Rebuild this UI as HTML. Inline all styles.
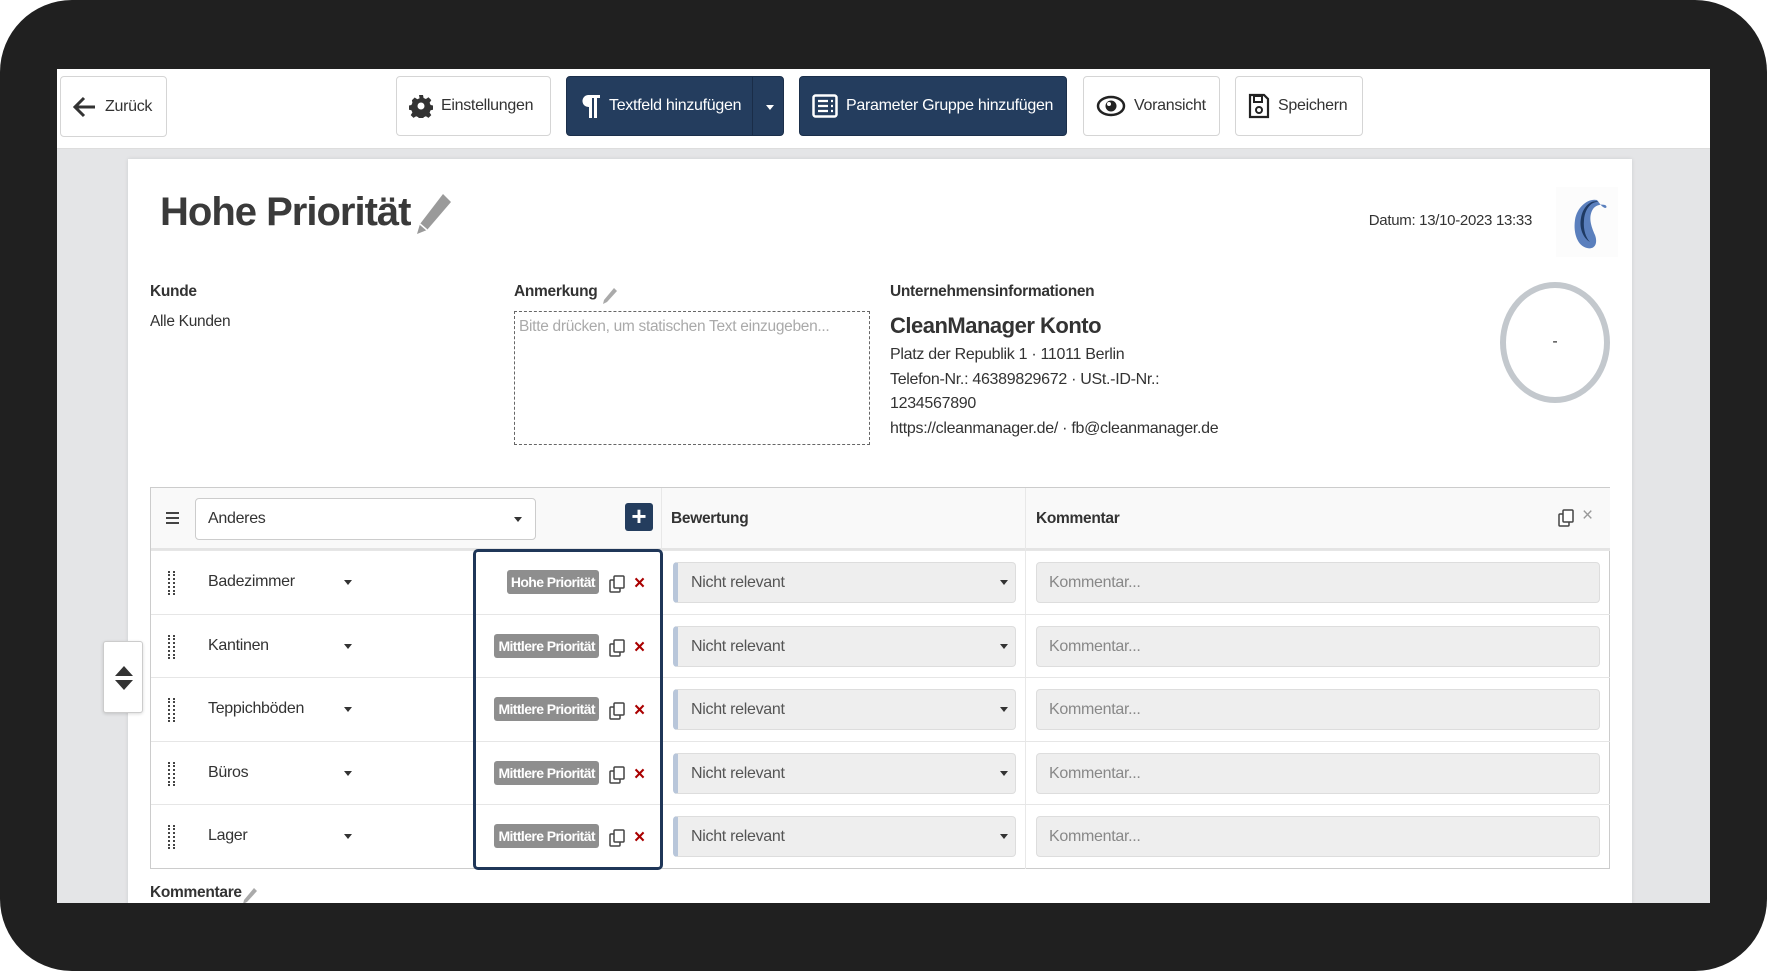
<!DOCTYPE html>
<html><head><meta charset="utf-8"><style>
*{box-sizing:border-box;margin:0;padding:0}
body{width:1767px;height:971px;background:#fff;font-family:"Liberation Sans",Arial,sans-serif;color:#333;position:relative;overflow:hidden}
.frame{position:absolute;left:0;top:0;width:1767px;height:971px;background:#202020;border-radius:72px}
.screen{position:absolute;left:57px;top:69px;width:1653px;height:834px;background:#e4e5e7;overflow:hidden}
.tb{position:absolute;left:0;top:0;width:1653px;height:80px;background:#fff;border-bottom:1px solid #ddd}
.btn{position:absolute;top:7px;height:60px;border:1px solid #d5d5d5;border-radius:4px;background:#fff;font-size:16px;color:#333;display:flex;align-items:center;padding-left:12px;letter-spacing:-0.3px}
.btn.dark{background:#243d5e;border-color:#1b2f4a;color:#fff}
.btn svg{margin-right:8px}
.card{position:absolute;left:71px;top:90px;width:1504px;height:760px;background:#fff;box-shadow:0 0 4px rgba(0,0,0,.1)}
.abs{position:absolute}
.lbl{font-weight:bold;font-size:15.5px;color:#333;letter-spacing:-0.3px}
.t{font-size:15.5px;color:#333;letter-spacing:-0.3px}
.row{position:absolute;left:0;width:1459px;height:64px;border-top:1px solid #e6e6e6}
.badge{position:absolute;top:19px;height:24px;background:#8e8e8e;color:#fff;font-weight:bold;font-size:14px;line-height:24px;padding:0 4px;border-radius:3px;letter-spacing:-0.6px;right:1011px;white-space:nowrap}
.sel{position:absolute;left:522px;top:11px;width:343px;height:41px;background:#eee;border:1px solid #ddd;border-left:5px solid #b8c6da;border-radius:4px;font-size:16px;color:#555;padding:11px 0 0 13px;letter-spacing:-0.3px}
.inp{position:absolute;left:885px;top:11px;width:564px;height:41px;background:#eee;border:1px solid #ddd;border-radius:4px;font-size:16px;color:#888;padding:11px 0 0 12px;letter-spacing:-0.3px}
.caret{position:absolute;width:0;height:0;border-left:4.5px solid transparent;border-right:4.5px solid transparent;border-top:5px solid #333}
.dots{position:absolute;top:20px;width:2px;height:24px;border-left:2px dotted #444}
</style></head><body>
<div class="frame"></div>
<div class="screen">
 <div class="tb">
  <div class="btn" style="left:3px;width:107px;top:7px;height:61px"><svg width="24" height="22" viewBox="0 0 24 22"><path d="M11 2 L2 11 L11 20 M2 11 H22" stroke="#333" stroke-width="3" fill="none"/></svg>Zurück</div>
  <div class="btn" style="left:339px;width:155px"><svg width="24" height="24" viewBox="0 0 24 24"><path fill="#333" d="M10 1h4l.6 3 2.3 1 2.6-1.7 2.8 2.8-1.7 2.6 1 2.3 3 .6v4l-3 .6-1 2.3 1.7 2.6-2.8 2.8-2.6-1.7-2.3 1-.6 3h-4l-.6-3-2.3-1-2.6 1.7-2.8-2.8 1.7-2.6-1-2.3-3-.6v-4l3-.6 1-2.3L2.9 6.3 5.7 3.5l2.6 1.7 2.3-1z"/><circle cx="12" cy="12" r="3.5" fill="#fff"/></svg>Einstellungen</div>
  <div class="btn dark" style="left:509px;width:218px"><svg width="22" height="26" viewBox="0 0 22 26"><path fill="#fff" d="M9 2h12v3h-3v20h-3V5h-2v20H10V14A6 6 0 0 1 9 2z"/></svg>Textfeld hinzufügen<div style="position:absolute;left:185px;top:0;width:1px;height:58px;background:#1a2d48"></div><div class="caret" style="left:199px;top:28px;border-top-color:#fff"></div></div>
  <div class="btn dark" style="left:742px;width:268px"><svg width="26" height="24" viewBox="0 0 26 24"><rect x="1.5" y="1.5" width="23" height="21" rx="2" fill="none" stroke="#fff" stroke-width="2.5"/><path d="M6 7h10M6 12h10M6 17h10M19 7h2M19 12h2M19 17h2" stroke="#fff" stroke-width="2.2"/></svg>Parameter Gruppe hinzufügen</div>
  <div class="btn" style="left:1026px;width:137px"><svg width="30" height="22" viewBox="0 0 30 22"><ellipse cx="15" cy="11" rx="13" ry="9" fill="none" stroke="#222" stroke-width="2.5"/><circle cx="15" cy="11" r="5.5" fill="#222"/><circle cx="13" cy="9" r="2" fill="#fff"/></svg>Voransicht</div>
  <div class="btn" style="left:1178px;width:128px"><svg width="22" height="26" viewBox="0 0 22 26"><path d="M2 2h14l4 4v18H2z" fill="none" stroke="#222" stroke-width="2.2"/><rect x="6" y="3" width="8" height="6" fill="none" stroke="#222" stroke-width="2"/><circle cx="11" cy="17" r="3" fill="none" stroke="#222" stroke-width="2"/></svg>Speichern</div>
 </div>
 <div class="card">
  <div class="abs" style="left:32px;top:31px;font-size:40px;font-weight:bold;color:#3a3a3a;letter-spacing:-1px">Hohe Priorität</div>
  <svg class="abs" style="left:287px;top:33px" width="38" height="44" viewBox="0 0 38 44"><path d="M28 2l8 8L12 38l-10 4 3-10z" fill="#9a9a9a"/><path d="M5 32l7 6" stroke="#fff" stroke-width="1.5"/></svg>
  <div class="abs t" style="right:100px;top:53px;font-size:15px">Datum: 13/10-2023 13:33</div>
  <div class="abs" style="left:1428px;top:28px;width:62px;height:70px;background:#fcfcfc"></div>
  <svg class="abs" style="left:1433px;top:35px" width="48" height="60" viewBox="0 0 48 60"><path d="M36 6c-8-2-20 6-22 20-2 14 3 26 12 28 8 2 11-5 8-13-4-9-7-18-2-26 3-4 8-5 12-4 2 1 2 3 0 3-3-1-5-4-8-8z" fill="#5a7fbd"/><path d="M38 8c-7-1-14 6-15 18-1 10 2 18 6 22-7-4-11-14-9-24 2-12 11-19 18-16z" fill="#1f3a63"/></svg>
  <div class="abs lbl" style="left:22px;top:124px">Kunde</div>
  <div class="abs t" style="left:22px;top:154px">Alle Kunden</div>
  <div class="abs lbl" style="left:386px;top:124px">Anmerkung</div>
  <svg class="abs" style="left:474px;top:128px" width="16" height="18" viewBox="0 0 16 18"><path d="M12 1l3 3L5 15l-4 2 1-4z" fill="#aaa"/></svg>
  <div class="abs" style="left:386px;top:152px;width:356px;height:134px;border:1px dashed #666;font-size:15.5px;color:#aaa;padding:6px 4px;letter-spacing:-0.3px">Bitte drücken, um statischen Text einzugeben...</div>
  <div class="abs lbl" style="left:762px;top:124px">Unternehmensinformationen</div>
  <div class="abs" style="left:762px;top:154px;font-size:22px;font-weight:bold;color:#333;letter-spacing:-0.5px">CleanManager Konto</div>
  <div class="abs t" style="left:762px;top:184px;line-height:24.7px;font-size:16px">Platz der Republik 1 · 11011 Berlin<br>Telefon-Nr.: 46389829672 · USt.-ID-Nr.:<br>1234567890<br>https://cleanmanager.de/ · fb@cleanmanager.de</div>
  <div class="abs" style="left:1372px;top:123px;width:110px;height:121px;border:6px solid #c3c8cd;border-radius:50%;text-align:center;line-height:108px;font-size:16px;color:#333">-</div>

  <div class="abs" style="left:22px;top:328px;width:1460px;height:382px;border:1px solid #ccc">
   <div class="abs" style="left:0;top:0;width:1459px;height:62px;background:#f9f9f9;border-bottom:2px solid #e4e4e4"></div>
   <div class="abs" style="left:15px;top:24px;width:13px;height:2px;background:#444;box-shadow:0 5px 0 #444,0 10px 0 #444"></div>
   <div class="abs" style="left:44px;top:10px;width:341px;height:42px;background:#fff;border:1px solid #ccc;border-radius:4px;font-size:16px;padding:11px 12px;letter-spacing:-0.3px">Anderes<div class="caret" style="left:318px;top:18px"></div></div>
   <div class="abs" style="left:474px;top:15px;width:28px;height:28px;background:#243d5e;border-radius:3px;color:#fff;font-size:26px;line-height:26px;text-align:center;font-weight:bold">+</div>
   <div class="abs lbl" style="left:520px;top:22px">Bewertung</div>
   <div class="abs lbl" style="left:885px;top:22px">Kommentar</div>
   <svg class="abs" style="left:1407px;top:21px" width="16" height="18" viewBox="0 0 16 18"><rect x="1" y="5" width="10" height="12" rx="1" fill="#fff" stroke="#444" stroke-width="1.5"/><rect x="5" y="1" width="10" height="12" rx="1" fill="#fff" stroke="#444" stroke-width="1.5"/></svg>
   <div class="abs" style="left:1431px;top:17px;font-size:19px;color:#999">×</div>
   <div class="abs" style="left:510px;top:0;width:1px;height:381px;background:#e8e8e8"></div>
   <div class="abs" style="left:874px;top:0;width:1px;height:381px;background:#e8e8e8"></div>

   <div class="row" style="top:62px">
    <div class="dots" style="left:17px"></div><div class="dots" style="left:22px"></div>
    <div class="abs t" style="left:57px;top:22px;font-size:16px">Badezimmer</div><div class="caret" style="left:193px;top:29px"></div>
    <div class="badge">Hohe Priorität</div>
    <svg class="abs" style="left:458px;top:24px" width="16" height="18" viewBox="0 0 16 18"><rect x="1" y="5" width="10" height="12" rx="1" fill="#fff" stroke="#444" stroke-width="1.5"/><rect x="5" y="1" width="10" height="12" rx="1" fill="#fff" stroke="#444" stroke-width="1.5"/></svg>
    <div class="abs" style="left:483px;top:22px;font-size:19px;color:#a00;font-weight:bold">×</div>
    <div class="sel">Nicht relevant<div class="caret" style="left:322px;top:17px"></div></div>
    <div class="inp">Kommentar...</div>
   </div>
   <div class="row" style="top:126px">
    <div class="dots" style="left:17px"></div><div class="dots" style="left:22px"></div>
    <div class="abs t" style="left:57px;top:22px;font-size:16px">Kantinen</div><div class="caret" style="left:193px;top:29px"></div>
    <div class="badge">Mittlere Priorität</div>
    <svg class="abs" style="left:458px;top:24px" width="16" height="18" viewBox="0 0 16 18"><rect x="1" y="5" width="10" height="12" rx="1" fill="#fff" stroke="#444" stroke-width="1.5"/><rect x="5" y="1" width="10" height="12" rx="1" fill="#fff" stroke="#444" stroke-width="1.5"/></svg>
    <div class="abs" style="left:483px;top:22px;font-size:19px;color:#a00;font-weight:bold">×</div>
    <div class="sel">Nicht relevant<div class="caret" style="left:322px;top:17px"></div></div>
    <div class="inp">Kommentar...</div>
   </div>
   <div class="row" style="top:189px">
    <div class="dots" style="left:17px"></div><div class="dots" style="left:22px"></div>
    <div class="abs t" style="left:57px;top:22px;font-size:16px">Teppichböden</div><div class="caret" style="left:193px;top:29px"></div>
    <div class="badge">Mittlere Priorität</div>
    <svg class="abs" style="left:458px;top:24px" width="16" height="18" viewBox="0 0 16 18"><rect x="1" y="5" width="10" height="12" rx="1" fill="#fff" stroke="#444" stroke-width="1.5"/><rect x="5" y="1" width="10" height="12" rx="1" fill="#fff" stroke="#444" stroke-width="1.5"/></svg>
    <div class="abs" style="left:483px;top:22px;font-size:19px;color:#a00;font-weight:bold">×</div>
    <div class="sel">Nicht relevant<div class="caret" style="left:322px;top:17px"></div></div>
    <div class="inp">Kommentar...</div>
   </div>
   <div class="row" style="top:253px">
    <div class="dots" style="left:17px"></div><div class="dots" style="left:22px"></div>
    <div class="abs t" style="left:57px;top:22px;font-size:16px">Büros</div><div class="caret" style="left:193px;top:29px"></div>
    <div class="badge">Mittlere Priorität</div>
    <svg class="abs" style="left:458px;top:24px" width="16" height="18" viewBox="0 0 16 18"><rect x="1" y="5" width="10" height="12" rx="1" fill="#fff" stroke="#444" stroke-width="1.5"/><rect x="5" y="1" width="10" height="12" rx="1" fill="#fff" stroke="#444" stroke-width="1.5"/></svg>
    <div class="abs" style="left:483px;top:22px;font-size:19px;color:#a00;font-weight:bold">×</div>
    <div class="sel">Nicht relevant<div class="caret" style="left:322px;top:17px"></div></div>
    <div class="inp">Kommentar...</div>
   </div>
   <div class="row" style="top:316px">
    <div class="dots" style="left:17px"></div><div class="dots" style="left:22px"></div>
    <div class="abs t" style="left:57px;top:22px;font-size:16px">Lager</div><div class="caret" style="left:193px;top:29px"></div>
    <div class="badge">Mittlere Priorität</div>
    <svg class="abs" style="left:458px;top:24px" width="16" height="18" viewBox="0 0 16 18"><rect x="1" y="5" width="10" height="12" rx="1" fill="#fff" stroke="#444" stroke-width="1.5"/><rect x="5" y="1" width="10" height="12" rx="1" fill="#fff" stroke="#444" stroke-width="1.5"/></svg>
    <div class="abs" style="left:483px;top:22px;font-size:19px;color:#a00;font-weight:bold">×</div>
    <div class="sel">Nicht relevant<div class="caret" style="left:322px;top:17px"></div></div>
    <div class="inp">Kommentar...</div>
   </div>
   <div class="abs" style="left:322px;top:61px;width:190px;height:321px;border:3.5px solid #1f3658;border-radius:5px"></div>
  </div>
  <div class="abs lbl" style="left:22px;top:725px">Kommentare</div>
  <svg class="abs" style="left:114px;top:728px" width="16" height="18" viewBox="0 0 16 18"><path d="M12 1l3 3L5 15l-4 2 1-4z" fill="#aaa"/></svg>
 </div>
 <div class="abs" style="left:46px;top:572px;width:40px;height:72px;background:#fff;border:1px solid #ccc;border-radius:3px;box-shadow:0 1px 3px rgba(0,0,0,.15)">
  <svg style="position:absolute;left:10px;top:22px" width="20" height="28" viewBox="0 0 20 28"><path d="M10 2 L19 12 H1z M10 26 L19 16 H1z" fill="#333"/></svg>
 </div>
</div>
</body></html>
